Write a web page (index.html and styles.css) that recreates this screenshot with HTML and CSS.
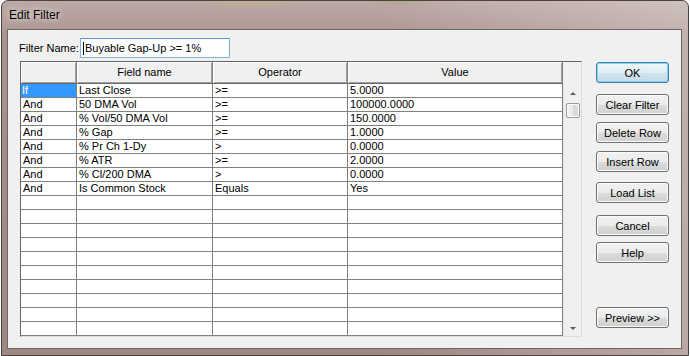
FILE: index.html
```html
<!DOCTYPE html>
<html lang="en">
<head>
  <meta charset="UTF-8">
  <title>Edit Filter</title>
  <link rel="stylesheet" href="styles.css">
</head>
<body>
  <div class="window">
    <div class="titlebar"><span class="title">Edit Filter</span></div>
    <div class="client">
      <div class="name-row">
        <label class="name-label">Filter Name:</label>
        <div class="name-input"><span class="caret"></span>Buyable Gap-Up &gt;= 1%</div>
      </div>
      <div class="main">
        <div class="grid">
          <div class="grid-head">
            <div class="hcell"></div>
            <div class="hcell">Field name</div>
            <div class="hcell">Operator</div>
            <div class="hcell">Value</div>
            <div class="hfill"></div>
          </div>
          <div class="grid-body">
            <div class="rows">
              <div class="cell selected">If</div><div class="cell">Last Close</div><div class="cell">&gt;=</div><div class="cell">5.0000</div>
              <div class="cell">And</div><div class="cell">50 DMA Vol</div><div class="cell">&gt;=</div><div class="cell">100000.0000</div>
              <div class="cell">And</div><div class="cell">% Vol/50 DMA Vol</div><div class="cell">&gt;=</div><div class="cell">150.0000</div>
              <div class="cell">And</div><div class="cell">% Gap</div><div class="cell">&gt;=</div><div class="cell">1.0000</div>
              <div class="cell">And</div><div class="cell">% Pr Ch 1-Dy</div><div class="cell">&gt;</div><div class="cell">0.0000</div>
              <div class="cell">And</div><div class="cell">% ATR</div><div class="cell">&gt;=</div><div class="cell">2.0000</div>
              <div class="cell">And</div><div class="cell">% Cl/200 DMA</div><div class="cell">&gt;</div><div class="cell">0.0000</div>
              <div class="cell">And</div><div class="cell">Is Common Stock</div><div class="cell">Equals</div><div class="cell">Yes</div>
              <div class="cell"></div><div class="cell"></div><div class="cell"></div><div class="cell"></div>
              <div class="cell"></div><div class="cell"></div><div class="cell"></div><div class="cell"></div>
              <div class="cell"></div><div class="cell"></div><div class="cell"></div><div class="cell"></div>
              <div class="cell"></div><div class="cell"></div><div class="cell"></div><div class="cell"></div>
              <div class="cell"></div><div class="cell"></div><div class="cell"></div><div class="cell"></div>
              <div class="cell"></div><div class="cell"></div><div class="cell"></div><div class="cell"></div>
              <div class="cell"></div><div class="cell"></div><div class="cell"></div><div class="cell"></div>
              <div class="cell"></div><div class="cell"></div><div class="cell"></div><div class="cell"></div>
              <div class="cell"></div><div class="cell"></div><div class="cell"></div><div class="cell"></div>
              <div class="cell"></div><div class="cell"></div><div class="cell"></div><div class="cell"></div>
            </div>
            <div class="vscroll">
              <div class="sb-btn"><span class="arrow-up"></span></div>
              <div class="sb-thumb"></div>
              <div class="sb-track"></div>
              <div class="sb-btn"><span class="arrow-down"></span></div>
            </div>
          </div>
        </div>
        <div class="buttons">
          <div class="btn default">OK</div>
          <div class="btn b-clear">Clear Filter</div>
          <div class="btn b-delete">Delete Row</div>
          <div class="btn b-insert">Insert Row</div>
          <div class="btn b-load">Load List</div>
          <div class="btn b-cancel">Cancel</div>
          <div class="btn b-help">Help</div>
          <div class="btn b-preview">Preview &gt;&gt;</div>
        </div>
      </div>
    </div>
  </div>
</body>
</html>
```

FILE: styles.css
```css
* {
  margin: 0;
  padding: 0;
  box-sizing: border-box;
}
body {
  background-color: #fff;
  overflow: hidden;
  font-family: "Liberation Sans", Arial, sans-serif;
  font-size: 11px;
  color: #000;
}
.window {
  margin-left: 1px;
  width: 688px;
  height: 356px;
  border: 1px solid #4e4240;
  border-radius: 7px 7px 0 0;
  padding: 0 6px 6px 5px;
  background:
    radial-gradient(ellipse 60px 8px at 250px 0, rgba(200, 190, 110, .35), transparent),
    radial-gradient(ellipse 40px 6px at 400px 0, rgba(150, 170, 90, .35), transparent),
    linear-gradient(90deg, rgba(255, 255, 255, 0) 55%, rgba(255, 255, 255, .28) 100%),
    linear-gradient(180deg, #bcaaa6 0, #a9918d 40px, #9f8783 100%);
}
.titlebar {
  height: 28px;
  line-height: 28px;
  padding-left: 2px;
}
.title {
  font-size: 12px;
  text-shadow: 0 0 6px rgba(255, 255, 255, .8), 0 0 10px rgba(255, 255, 255, .5);
}
.client {
  height: 320px;
  border: 1px solid #6f6563;
  background-color: #f0f0f0;
  padding-top: 8px;
  display: flex;
  flex-direction: column;
}
.name-row {
  display: flex;
  align-items: center;
  height: 20px;
  padding-left: 11px;
}
.name-label {
  width: 61px;
}
.name-input {
  width: 150px;
  height: 20px;
  border: 1px solid #82b3e2;
  border-top-color: #5d95cc;
  background-color: #fff;
  padding-left: 2px;
  display: flex;
  align-items: center;
  white-space: nowrap;
}
.caret {
  width: 1px;
  height: 13px;
  background-color: #000;
  margin-right: 1px;
}
.main {
  display: flex;
  margin-top: 3px;
  padding-left: 12px;
  gap: 14px;
}
.grid {
  width: 562px;
  height: 276px;
  border: 1px solid;
  border-color: #646464 #dcdcdc #dcdcdc #646464;
  background-color: #fff;
}
.grid-head {
  display: grid;
  grid-template-columns: 56px 136px 135px 215px 1fr;
  height: 22px;
}
.hcell {
  background-color: #f0f0f0;
  border-right: 1px solid #808080;
  border-bottom: 1px solid #696969;
  box-shadow: inset 1px 1px 0 #fff, inset -1px -1px 0 #a0a0a0;
  text-align: center;
  line-height: 20px;
}
.hfill {
  background-color: #f0f0f0;
}
.grid-body {
  display: flex;
}
.rows {
  display: grid;
  grid-template-columns: 56px 136px 135px 215px;
  grid-auto-rows: 14px;
}
.cell {
  border-right: 1px solid #808080;
  border-bottom: 1px solid #808080;
  padding-left: 2px;
  line-height: 13px;
  white-space: nowrap;
  overflow: hidden;
}
.cell.selected {
  background-color: #3399ff;
  color: #fff;
  padding-left: 1px;
}
.vscroll {
  width: 18px;
  height: 252px;
  background-color: #f0f0f0;
  box-shadow: inset 1px 0 0 #e4e4e4;
  display: flex;
  flex-direction: column;
  align-items: center;
}
.sb-btn {
  height: 18px;
  width: 100%;
  display: flex;
  align-items: center;
  justify-content: center;
}
.arrow-up,
.arrow-down {
  width: 0;
  height: 0;
  border-left: 3.5px solid transparent;
  border-right: 3.5px solid transparent;
}
.arrow-up {
  border-bottom: 3px solid #5a5a5a;
  margin-left: 1px;
}
.arrow-down {
  border-top: 3px solid #5a5a5a;
  margin-top: 3px;
  margin-left: 2px;
}
.sb-thumb {
  width: 14px;
  height: 15px;
  margin-top: 1px;
  margin-left: 1px;
  border: 1px solid #9a9a9a;
  border-radius: 2px;
  background: linear-gradient(90deg, #f4f4f4, #e8e8e8 50%, #d9d9d9 51%, #dcdcdc);
  box-shadow: inset 0 0 0 1px #fafafa;
}
.sb-track {
  flex: 1;
}
.buttons {
  display: flex;
  flex-direction: column;
  padding-top: 1px;
  width: 73px;
}
.btn {
  height: 21px;
  width: 73px;
  border: 1px solid #707070;
  border-radius: 3px;
  background: linear-gradient(180deg, #f2f2f2 0, #ebebeb 50%, #dddddd 51%, #cfcfcf 100%);
  box-shadow: inset 0 0 0 1px #fbfbfb;
  display: flex;
  align-items: center;
  justify-content: center;
  white-space: nowrap;
}
.btn.default {
  border-color: #3c7fb1;
  background: linear-gradient(180deg, #eef6fa 0, #e1edf4 50%, #d2e3ec 51%, #c6dbe6 100%);
  box-shadow: inset 0 0 0 1px #86d2f3;
}
.b-clear { margin-top: 11px; }
.b-delete { margin-top: 7px; }
.b-insert { margin-top: 8px; }
.b-load { margin-top: 10px; }
.b-cancel { margin-top: 12px; }
.b-help { margin-top: 6px; }
.b-preview { margin-top: 44px; }
```
